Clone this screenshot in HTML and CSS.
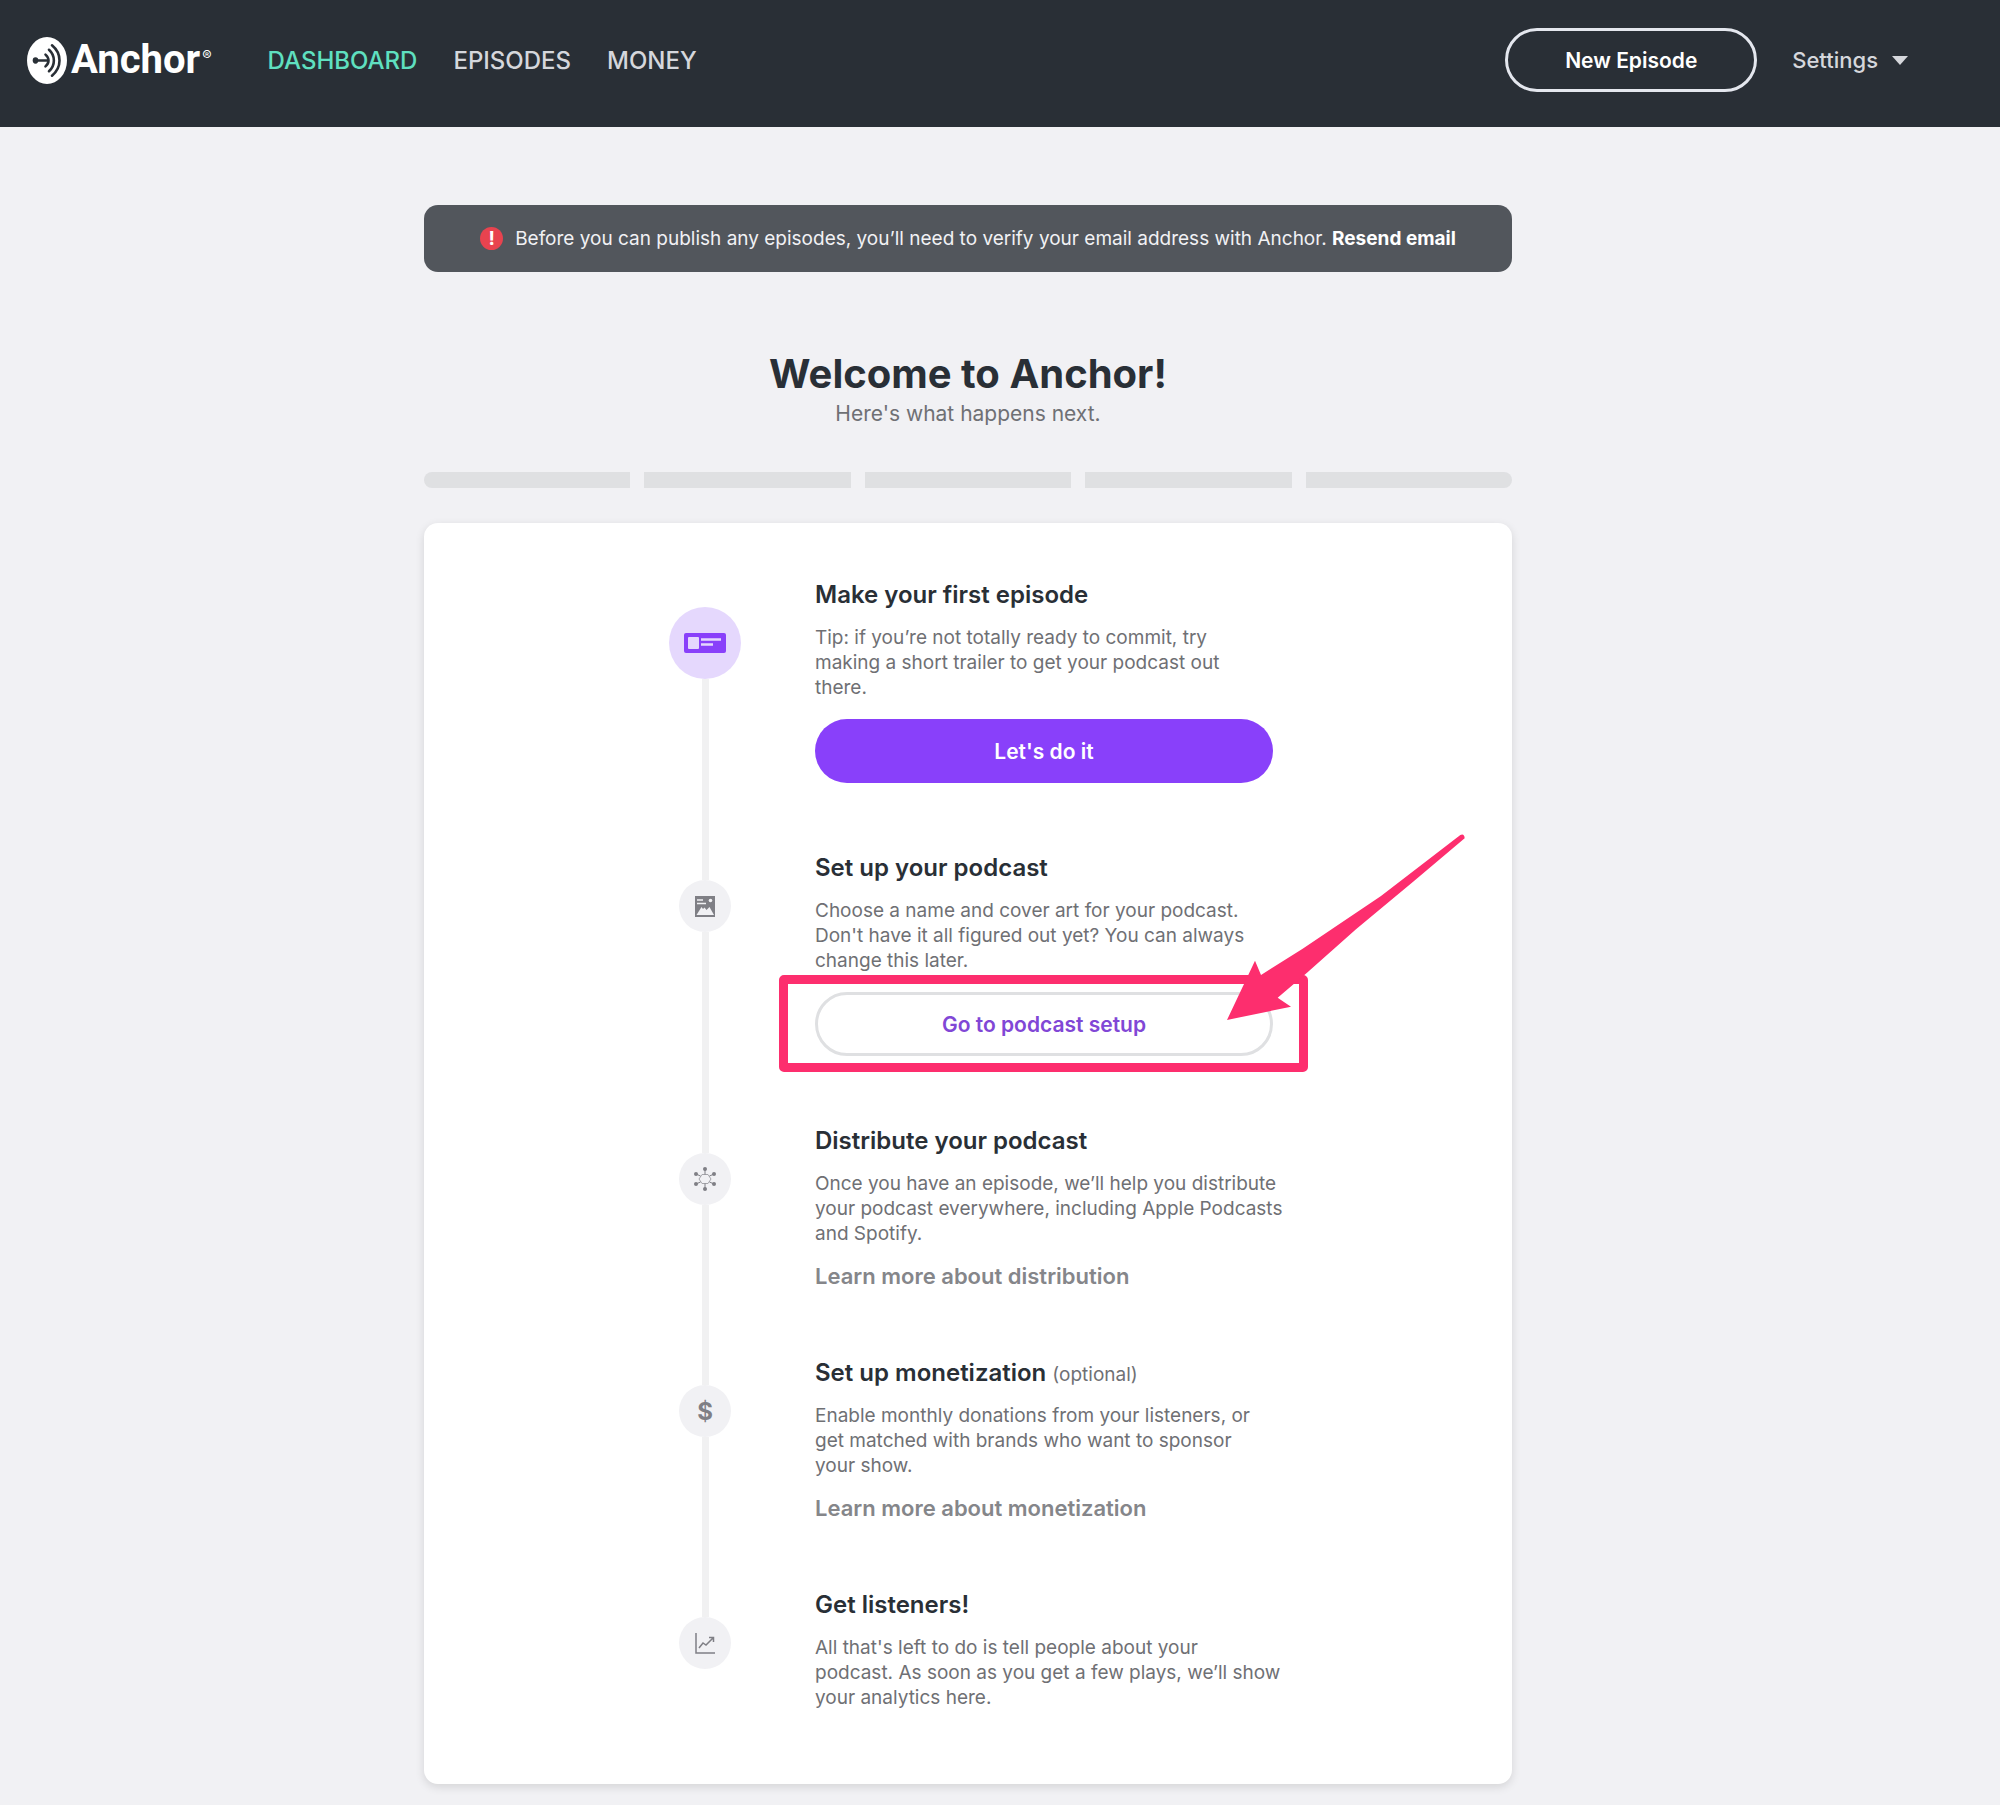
FILE: index.html
```html
<!DOCTYPE html>
<html lang="en">
<head>
  <meta charset="UTF-8" />
  <meta name="viewport" content="width=device-width, initial-scale=1.0" />
  <title>Anchor - Dashboard</title>
  <link rel="stylesheet" href="styles.css">
</head>
<body>

  <!-- Header -->
  <header class="header">
    <a class="logo" href="#" aria-label="Anchor home">
      <svg class="logo-mark" viewBox="0 0 40 48" preserveAspectRatio="none" aria-hidden="true">
        <ellipse cx="20" cy="24" rx="20" ry="24" fill="#fff" />
        <g fill="none" stroke="#292f36" stroke-width="2.6" stroke-linecap="round">
          <path d="M9 24h11" />
          <path d="M18.500 18c4 3.500 4 8.500 0 12" />
          <path d="M22 13c6.500 6 6.500 16 0 22" />
          <path d="M25 8.500c10 8.500 10 22.500 0 31" />
        </g>
        <ellipse cx="8.500" cy="24" rx="2.800" ry="3.200" fill="#292f36" />
      </svg>
      <span class="logo-text">Anchor</span><span class="logo-reg">®</span>
    </a>
    <nav class="nav">
      <a class="active" href="#">DASHBOARD</a>
      <a href="#">EPISODES</a>
      <a href="#">MONEY</a>
    </nav>
    <button class="btn btn-new" type="button">New Episode</button>
    <button class="settings" type="button">Settings <span class="caret"></span></button>
  </header>

  <main class="main">
    <!-- Verify email notice -->
    <div class="notice">
      <span class="notice-icon">!</span>
      <p>Before you can publish any episodes, you’ll need to verify your email address with Anchor. <a href="#">Resend email</a></p>
    </div>

    <h1>Welcome to Anchor!</h1>
    <p class="subtitle">Here's what happens next.</p>

    <div class="progress">
      <span></span><span></span><span></span><span></span><span></span>
    </div>

    <!-- Steps -->
    <ol class="card">
      <li class="step">
        <div class="marker">
          <span class="dot dot-active">
            <svg width="42" height="20" viewBox="0 0 42 20" aria-hidden="true">
              <rect width="42" height="20" rx="2" fill="#8940fa" />
              <rect x="4" y="4" width="11" height="12" rx="1" fill="#e5d8fd" />
              <path d="M17 6.500h20M17 11.500h12" stroke="#e5d8fd" stroke-width="2.500" />
            </svg>
          </span>
        </div>
        <div class="content">
          <h2>Make your first episode</h2>
          <p>Tip: if you’re not totally ready to commit, try<br>making a short trailer to get your podcast out<br>there.</p>
          <button class="btn btn-primary" type="button">Let's do it</button>
        </div>
      </li>

      <li class="step">
        <div class="marker">
          <span class="dot">
            <svg width="20" height="21" viewBox="0 0 20 21" aria-hidden="true">
              <rect width="20" height="21" fill="#7f7f85" />
              <path d="M2 4h6M2 7.500h9" stroke="#f1f1f4" stroke-width="1.600" />
              <circle cx="15.500" cy="4.500" r="1.800" fill="#f1f1f4" />
              <path d="M1.500 19l5-8 1.500 2 1.500-1.500 2 2.500 3-3 4.500 8z" fill="#f1f1f4" />
            </svg>
          </span>
        </div>
        <div class="content">
          <h2>Set up your podcast</h2>
          <p>Choose a name and cover art for your podcast.<br>Don't have it all figured out yet? You can always<br>change this later.</p>
          <div class="callout">
            <button class="btn btn-outline" type="button">Go to podcast setup</button>
            <span class="callout-box"></span>
            <svg class="callout-arrow" viewBox="0 0 960 810" aria-hidden="true">
              <path d="M138 600L222 422L240 465L365 386L600 228L838 45Q850 40 851 55L700 182L525 328L378 458L290 533L330 560Z" fill="#fd2e6e" />
            </svg>
          </div>
        </div>
      </li>

      <li class="step">
        <div class="marker">
          <span class="dot">
            <svg width="24" height="24" viewBox="0 0 24 24" aria-hidden="true">
              <path d="M9 7.500h6l3 4.500-3 4.500H9L6 12z" fill="none" stroke="#a5a5aa" />
              <path d="M12 7.500V2M16.500 9L21 7M16.500 15L21 17M12 16.500V22M7.500 15L3 17M7.500 9L3 7" fill="none" stroke="#7f7f85" />
              <g fill="#7f7f85">
                <circle cx="12" cy="2" r="2" /><circle cx="21" cy="7" r="2" /><circle cx="21" cy="17" r="2" />
                <circle cx="12" cy="22" r="2" /><circle cx="3" cy="17" r="2" /><circle cx="3" cy="7" r="2" />
              </g>
            </svg>
          </span>
        </div>
        <div class="content">
          <h2>Distribute your podcast</h2>
          <p>Once you have an episode, we’ll help you distribute<br>your podcast everywhere, including Apple Podcasts<br>and Spotify.</p>
          <a href="#">Learn more about distribution</a>
        </div>
      </li>

      <li class="step">
        <div class="marker">
          <span class="dot">$</span>
        </div>
        <div class="content">
          <h2>Set up monetization <small>(optional)</small></h2>
          <p>Enable monthly donations from your listeners, or<br>get matched with brands who want to sponsor<br>your show.</p>
          <a href="#">Learn more about monetization</a>
        </div>
      </li>

      <li class="step">
        <div class="marker">
          <span class="dot">
            <svg width="20" height="21" viewBox="0 0 20 21" fill="none" stroke="#7f7f85" stroke-width="1.500" aria-hidden="true">
              <path d="M1 0v20h19M4 15l4-5 3 2 7-7M14 4.500h4.500V9" />
            </svg>
          </span>
        </div>
        <div class="content">
          <h2>Get listeners!</h2>
          <p>All that's left to do is tell people about your<br>podcast. As soon as you get a few plays, we’ll show<br>your analytics here.</p>
        </div>
      </li>
    </ol>
  </main>

</body>
</html>
```
FILE: styles.css
```css
* {
  box-sizing: border-box;
}
body {
  margin: 0;
  font-family: Inter, 'Liberation Sans', sans-serif;
  font-size: 19px;
  line-height: 25px;
  background-color: #f1f1f4;
  color: #6f7074;
}
h1, h2, p {
  margin: 0;
}
a {
  text-decoration: none;
}
button {
  font-family: inherit;
  cursor: pointer;
}

/* header */
.header {
  display: flex;
  align-items: center;
  height: 127px;
  padding: 0 92px 7px 27px;
  background-color: #292f36;
}
.logo {
  display: flex;
  align-items: center;
  color: #fff;
}
.logo-mark {
  width: 40px;
  height: 47px;
  margin-right: 4px;
}
.logo-text {
  font-family: Roboto, sans-serif;
  font-size: 40px;
  font-weight: 700;
  line-height: 48px;
}
.logo-reg {
  align-self: flex-start;
  margin: 7px 0 0 2px;
  font-size: 14px;
}
.nav {
  display: flex;
  gap: 36px;
  margin: 0 auto 0 56px;
}
.nav a {
  color: #d5d7dc;
  font-size: 24px;
  font-weight: 500;
}
.nav a.active {
  color: #5fe0c0;
}
.btn {
  height: 64px;
  border: none;
  border-radius: 32px;
  font-size: 21px;
  font-weight: 600;
}
.btn-new {
  width: 252px;
  border: 3px solid #e4e7ee;
  background-color: transparent;
  color: #fff;
}
.settings {
  display: flex;
  align-items: center;
  gap: 14px;
  margin-left: 35px;
  padding: 0;
  border: none;
  background: none;
  color: #d5d7dc;
  font-size: 22px;
  font-weight: 500;
}
.caret {
  border: 8px solid transparent;
  border-top: 9px solid #d5d7dc;
  border-bottom: 0;
}

/* main column */
.main {
  box-sizing: content-box;
  max-width: 1088px;
  margin: 0 auto;
  padding: 78px 64px 21px 0;
}
.notice {
  display: flex;
  align-items: center;
  justify-content: center;
  gap: 12px;
  min-height: 67px;
  border-radius: 14px;
  background-color: #52565c;
  color: #f1f1f4;
}
.notice a {
  color: #fff;
  font-weight: 700;
}
.notice-icon {
  width: 23px;
  height: 23px;
  border-radius: 50%;
  background-color: #e8434f;
  color: #fff;
  font-weight: 700;
  line-height: 23px;
  text-align: center;
}
h1 {
  margin-top: 78px;
  color: #292f36;
  font-size: 40px;
  line-height: 48px;
  text-align: center;
}
.subtitle {
  margin-top: 3px;
  font-size: 21px;
  text-align: center;
}
.progress {
  display: flex;
  gap: 14px;
  height: 16px;
  margin: 46px 0 35px;
  border-radius: 8px;
  overflow: hidden;
}
.progress span {
  flex: 1;
  background-color: #dfe0e2;
}

/* steps */
.card {
  margin: 0;
  padding: 56px 0 74px 6px;
  border-radius: 14px;
  background-color: #fff;
  box-shadow: 0 3px 10px rgba(0, 0, 0, 0.12);
  list-style: none;
}
.step {
  display: flex;
  justify-content: center;
  gap: 74px;
}
.marker {
  display: flex;
  flex-direction: column;
  align-items: center;
  width: 72px;
  padding-top: 28px;
}
.marker::after {
  content: "";
  flex: 1;
  width: 7px;
  margin-bottom: -28px;
  background-color: #f1f1f2;
}
.step:last-child .marker::after {
  display: none;
}
.dot {
  display: flex;
  align-items: center;
  justify-content: center;
  width: 52px;
  height: 52px;
  border-radius: 50%;
  background-color: #f1f1f4;
  color: #7f7f85;
  font-size: 24px;
  font-weight: 700;
}
.dot-active {
  width: 72px;
  height: 72px;
  background-color: #e5d8fd;
}
.content {
  width: 458px;
  padding-bottom: 69px;
}
.step:last-child .content {
  padding-bottom: 0;
}
.content h2 {
  margin-bottom: 14px;
  color: #292f36;
  font-size: 24px;
  font-weight: 600;
  line-height: 32px;
}
.content small {
  color: #6f7074;
  font-size: 19px;
  font-weight: 400;
  line-height: 19px;
}
.content p {
  white-space: nowrap;
}
.content > a {
  display: block;
  margin-top: 19px;
  color: #85868a;
  font-size: 22px;
  font-weight: 600;
  line-height: 23px;
}
.content .btn {
  display: block;
  width: 100%;
}
.btn-primary {
  margin-top: 19px;
  background-color: #8940fa;
  color: #fff;
}
.btn-outline {
  border: 3px solid #dfe0e2;
  background-color: #fff;
  color: #8147d6;
}

/* highlight around the setup button */
.callout {
  position: relative;
  margin-top: 19px;
}
.callout-box {
  position: absolute;
  inset: -17px -35px -16px -36px;
  border: 9px solid #fd2e6e;
  border-radius: 5px;
  pointer-events: none;
}
.callout-arrow {
  position: absolute;
  top: -172px;
  left: 366px;
  width: 320px;
  height: 270px;
  pointer-events: none;
}
```
